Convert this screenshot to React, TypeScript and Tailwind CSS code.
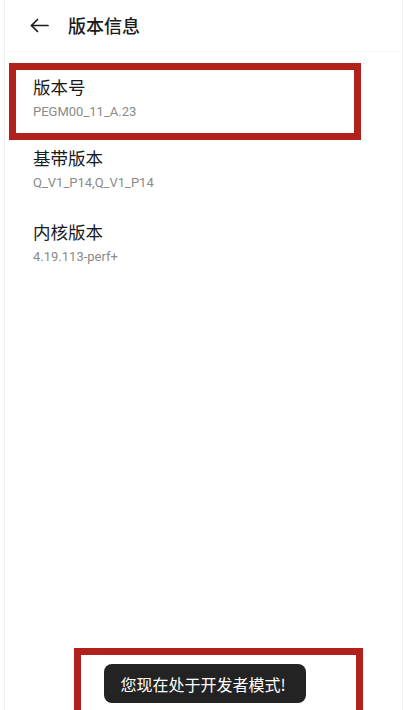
import React from "react";

const cjk = { fontFamily: '"Noto Sans CJK SC", "Noto Sans", sans-serif' };
const latin = { fontFamily: 'Roboto, "Noto Sans CJK SC", sans-serif' };

type InfoRow = { label: string; value: string };

const rows: InfoRow[] = [
  { label: "基带版本", value: "Q_V1_P14,Q_V1_P14" },
  { label: "内核版本", value: "4.19.113-perf+" },
];

function BackArrow() {
  return (
    <svg width="19" height="15" viewBox="0 0 19 15" fill="none" stroke="#1c1c1c" strokeWidth="1.7" strokeLinecap="round" strokeLinejoin="round">
      <path d="M18 7.5H1.5" />
      <path d="M7.5 1.5L1.5 7.5l6 6" />
    </svg>
  );
}

function Row({ label, value }: InfoRow) {
  return (
    <div className="flex flex-col gap-[4px]">
      <div className="text-[17.5px] leading-[24px] text-[#1a1a1a]" style={cjk}>
        {label}
      </div>
      <div className="text-[13px] leading-[18px] text-[#8a8a8a]" style={latin}>
        {value}
      </div>
    </div>
  );
}

export default function App() {
  return (
    <div className="h-[710px] w-[404px] overflow-hidden bg-white">
      <div className="ml-[4px] mr-[1px] flex h-full flex-col border-x border-[#f0f0f0]">
        <header className="flex h-[52px] items-center border-b border-[#f7f7f7] pl-[25px]">
          <BackArrow />
          <h1 className="ml-[19px] text-[18px] font-medium text-[#1a1a1a]" style={cjk}>
            版本信息
          </h1>
        </header>

        <div className="ml-[4px] mt-[11px] h-[77px] w-[352px] border-[7px] border-[#b1211b] pl-[17px] pt-[5px]">
          <Row label="版本号" value="PEGM00_11_A.23" />
        </div>

        <div className="mt-[6px] flex flex-col gap-[28px] pl-[28px]">
          {rows.map((row) => (
            <Row key={row.label} {...row} />
          ))}
        </div>

        <div className="ml-[69px] mt-auto h-[62px] w-[289px] border-[7px] border-b-0 border-[#b1211b] pl-[23px] pt-[9px]">
          <div className="flex h-[39px] w-[202px] items-center justify-center rounded-[8px] bg-[#232323] pr-[4px]">
            <span className="text-[16px] text-white" style={cjk}>
              您现在处于开发者模式!
            </span>
          </div>
        </div>
      </div>
    </div>
  );
}
